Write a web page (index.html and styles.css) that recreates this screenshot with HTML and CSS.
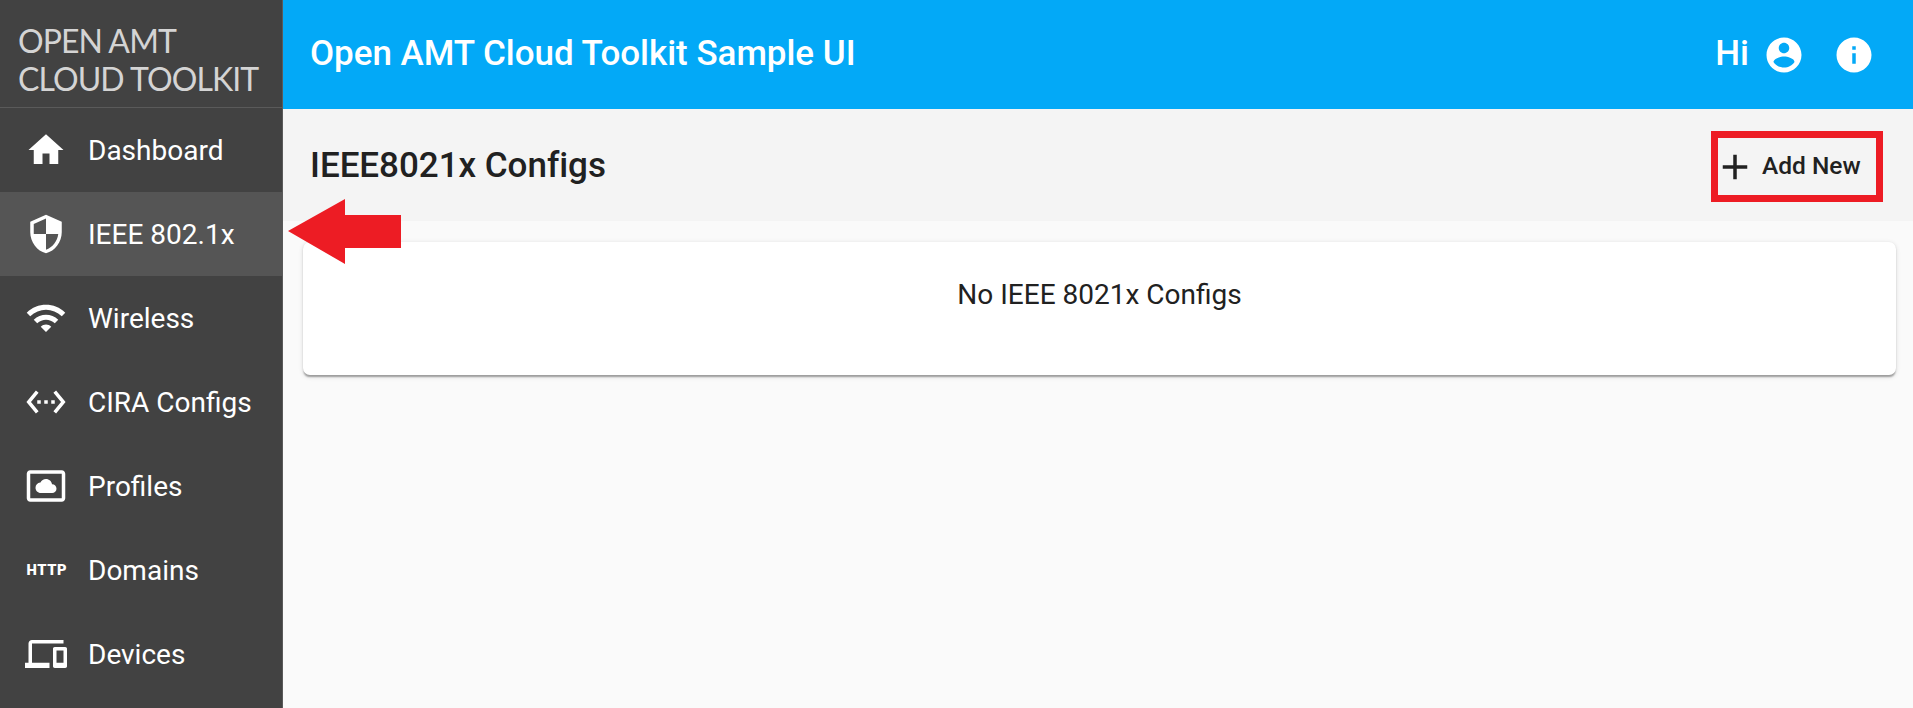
FILE: index.html
```html
<!DOCTYPE html>
<html lang="en">
<head>
<meta charset="utf-8">
<title>Open AMT Cloud Toolkit</title>
<link rel="stylesheet" href="styles.css">
</head>
<body>
<div class="app">
  <aside class="sidebar">
    <div class="brand">
      <span>OPEN AMT</span>
      <span>CLOUD TOOLKIT</span>
    </div>
    <nav class="nav">
      <a class="nav-item"><svg class="icon" viewBox="0 0 24 24"><path d="M10 20v-6h4v6h5v-8h3L12 3 2 12h3v8z"/></svg><span>Dashboard</span></a>
      <a class="nav-item active"><svg class="icon" viewBox="0 0 24 24"><path d="M12 1L3 5v6c0 5.55 3.84 10.74 9 12 5.16-1.26 9-6.45 9-12V5l-9-4zm0 10.99h7c-.53 4.12-3.28 7.79-7 8.94V12H5V6.3l7-3.11v8.8z"/></svg><span>IEEE 802.1x</span></a>
      <a class="nav-item"><svg class="icon" viewBox="0 0 24 24"><path d="M1 9l2 2c4.97-4.97 13.03-4.97 18 0l2-2C16.93 2.93 7.08 2.93 1 9zm8 8l3 3 3-3c-1.65-1.66-4.34-1.66-6 0zm-4-4l2 2c2.76-2.76 7.24-2.76 10 0l2-2C15.14 9.14 8.87 9.14 5 13z"/></svg><span>Wireless</span></a>
      <a class="nav-item"><svg class="icon" viewBox="0 0 24 24"><path d="M7.77 6.76L6.23 5.48.82 12l5.41 6.52 1.54-1.28L3.42 12l4.35-5.24zM7 13h2v-2H7v2zm10-2h-2v2h2v-2zm-6 2h2v-2h-2v2zm6.77-7.52l-1.54 1.28L20.58 12l-4.35 5.24 1.54 1.28L23.18 12l-5.41-6.52z"/></svg><span>CIRA Configs</span></a>
      <a class="nav-item"><svg class="icon" viewBox="0 0 24 24"><path d="M9 16h6.5c1.38 0 2.5-1.12 2.5-2.5S16.88 11 15.5 11h-.05c-.24-1.69-1.69-3-3.45-3-1.4 0-2.6.83-3.16 2.02h-.16C7.17 10.18 6 11.45 6 13c0 1.66 1.34 3 3 3zM21 3H3c-1.1 0-2 .9-2 2v14c0 1.1.9 2 2 2h18c1.1 0 2-.9 2-2V5c0-1.1-.9-2-2-2zm0 16.01H3V4.99h18v14.02z"/></svg><span>Profiles</span></a>
      <a class="nav-item"><svg class="icon" viewBox="0 0 24 24"><text class="http" x="0.8" y="15" textLength="23" lengthAdjust="spacing">HTTP</text></svg><span>Domains</span></a>
      <a class="nav-item"><svg class="icon" viewBox="0 0 24 24"><path d="M4 6h18V4H4c-1.1 0-2 .9-2 2v11H0v3h14v-3H4V6zm19 2h-6c-.55 0-1 .45-1 1v10c0 .55.45 1 1 1h6c.55 0 1-.45 1-1V9c0-.55-.45-1-1-1zm-1 9h-4v-7h4v7z"/></svg><span>Devices</span></a>
    </nav>
  </aside>
  <main class="main">
    <header class="topbar">
      <h1 class="title">Open AMT Cloud Toolkit Sample UI</h1>
      <span class="greeting">Hi</span>
      <svg class="icon account" viewBox="0 0 24 24"><path d="M12 2C6.48 2 2 6.48 2 12s4.48 10 10 10 10-4.48 10-10S17.52 2 12 2zm0 3c1.66 0 3 1.34 3 3s-1.34 3-3 3-3-1.34-3-3 1.34-3 3-3zm0 14.2c-2.5 0-4.71-1.28-6-3.22.03-1.99 4-3.08 6-3.08 1.99 0 5.97 1.09 6 3.08-1.29 1.94-3.5 3.22-6 3.22z"/></svg>
      <svg class="icon" viewBox="0 0 24 24"><path d="M12 2C6.48 2 2 6.48 2 12s4.48 10 10 10 10-4.48 10-10S17.52 2 12 2zm1 15h-2v-6h2v6zm0-8h-2V7h2v2z"/></svg>
    </header>
    <div class="subbar">
      <h2 class="title">IEEE8021x Configs</h2>
      <button class="add"><svg class="icon" viewBox="0 0 24 24"><path d="M19 13h-6v6h-2v-6H5v-2h6V5h2v6h6v2z"/></svg><span>Add New</span></button>
    </div>
    <section class="card">No IEEE 8021x Configs</section>
  </main>
  <svg class="arrow" width="113" height="65" viewBox="0 0 113 65"><path d="M0 32L57 0V16H113V49H57V65z"/></svg>
</div>
</body>
</html>
```
FILE: styles.css
```css
* { box-sizing: border-box; }
body {
  margin: 0;
  background: #fafafa;
  color: #212121;
  font-family: Roboto, "Liberation Sans", sans-serif;
  font-size: 28px;
}
.app {
  position: relative;
  display: flex;
  height: 708px;
  overflow: hidden;
}
.icon {
  width: 42px;
  height: 42px;
  flex: none;
  fill: currentColor;
}
.sidebar {
  width: 283px;
  flex: none;
  background: #424242;
  border-right: 1px solid #5a5a5a;
  color: #fff;
}
.brand {
  display: flex;
  flex-direction: column;
  height: 108px;
  padding: 22px 0 0 18px;
  border-bottom: 1px solid #5a5a5a;
  color: #d4d4d4;
  font-family: Lato, sans-serif;
  font-size: 32px;
  line-height: 38px;
  letter-spacing: -0.9px;
  white-space: nowrap;
}
.nav-item {
  display: flex;
  align-items: center;
  gap: 21px;
  height: 84px;
  padding-left: 25px;
  white-space: nowrap;
}
.nav-item.active { background: #555; }
.http {
  font-size: 8.4px;
  font-weight: 900;
}
.main {
  flex: 1;
  min-width: 0;
}
.topbar {
  display: flex;
  align-items: center;
  height: 109px;
  padding: 0 38px 3px 27px;
  background: #03a9f7;
  color: #fff;
}
.topbar .icon { margin-top: 4px; }
.topbar .account { margin: 4px 28px 0 14px; }
.title {
  flex: 1;
  margin: 0;
  font-size: 35px;
  font-weight: 500;
  letter-spacing: -0.03px;
}
.greeting {
  font-size: 35px;
  font-weight: 500;
}
.subbar {
  display: flex;
  align-items: center;
  height: 112px;
  padding: 0 30px 0 27px;
  background: #f4f4f4;
}
.add {
  display: flex;
  align-items: center;
  gap: 6px;
  width: 172px;
  height: 71px;
  padding: 0;
  margin-top: 3px;
  border: 7px solid #ed1c24;
  background: none;
  color: #212121;
  font: 500 24.5px Roboto, sans-serif;
  white-space: nowrap;
}
.add .icon { margin-left: -4px; }
.add span { padding-bottom: 3px; }
.card {
  height: 133px;
  margin: 21px 17px 0 20px;
  padding-top: 36px;
  border-radius: 7px;
  background: #fff;
  box-shadow: 0 3.5px 1.75px -1.75px rgba(0,0,0,.2), 0 1.75px 1.75px rgba(0,0,0,.14), 0 1.75px 5.25px rgba(0,0,0,.12);
  text-align: center;
}
.arrow {
  position: absolute;
  left: 288px;
  top: 199px;
  fill: #ed1c24;
}
```
